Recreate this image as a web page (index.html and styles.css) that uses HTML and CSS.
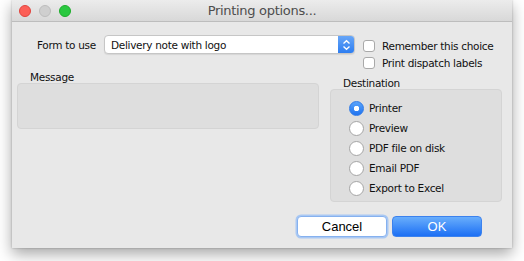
FILE: index.html
```html
<!DOCTYPE html>
<html lang="en">
<head>
    <meta charset="UTF-8">
    <title>Printing options...</title>
    <link rel="stylesheet" href="styles.css">
</head>
<body>
    <div class="window">
        <!-- title bar -->
        <div class="titlebar">
            <div class="lights">
                <span class="light red"></span>
                <span class="light gray"></span>
                <span class="light green"></span>
            </div>
            <div class="title">Printing options...</div>
        </div>

        <div class="content">
            <!-- form row -->
            <div class="top-row">
                <div class="form-field">
                    <span class="label">Form to use</span>
                    <div class="popup">
                        <span class="popup-text">Delivery note with logo</span>
                        <span class="stepper">
                            <svg width="9" height="12" viewBox="0 0 9 12">
                                <path d="M1.5 4.5 L4.5 1.8 L7.5 4.5 M1.5 7.5 L4.5 10.2 L7.5 7.5" fill="none" stroke="#fff" stroke-width="1.4"/>
                            </svg>
                        </span>
                    </div>
                </div>
                <div class="checks">
                    <label class="check"><span class="box"></span>Remember this choice</label>
                    <label class="check"><span class="box"></span>Print dispatch labels</label>
                </div>
            </div>

            <div class="main">
                <div class="message-col">
                    <div class="group-label">Message</div>
                    <div class="group-box message-box"></div>
                </div>
                <div class="dest-col">
                    <div class="group-label">Destination</div>
                    <div class="group-box dest-box">
                        <div class="radio-row"><span class="radio on"></span>Printer</div>
                        <div class="radio-row"><span class="radio"></span>Preview</div>
                        <div class="radio-row"><span class="radio"></span>PDF file on disk</div>
                        <div class="radio-row"><span class="radio"></span>Email PDF</div>
                        <div class="radio-row"><span class="radio"></span>Export to Excel</div>
                    </div>
                </div>
            </div>

            <!-- buttons -->
            <div class="buttons">
                <button class="btn cancel">Cancel</button>
                <button class="btn ok">OK</button>
            </div>
        </div>
    </div>
</body>
</html>
```
FILE: styles.css
```css
body {
    margin: 0;
    padding: 0;
    background: #ffffff;
    font-family: "DejaVu Sans", sans-serif;
    font-size: 10.5px;
    letter-spacing: -0.3px;
    color: #111;
    height: 261px;
    overflow: hidden;
    white-space: nowrap;
}

.window {
    margin-left: 12px;
    width: 500px;
    height: 248px;
    background: #e8e8e8;
    box-shadow: 0 6px 14px rgba(0,0,0,0.35), 0 0 2px rgba(0,0,0,0.25);
    display: flex;
    flex-direction: column;
}

/* title bar */
.titlebar {
    position: relative;
    height: 21px;
    background: linear-gradient(to bottom, #ececec 0%, #d8d8d8 100%);
    border-bottom: 1px solid #bdbdbd;
    display: flex;
    align-items: center;
    justify-content: center;
}

.lights {
    position: absolute;
    left: 7px;
    top: 5px;
    display: flex;
    gap: 8px;
}

.light {
    width: 12px;
    height: 12px;
    border-radius: 50%;
    box-sizing: border-box;
}

.red { background: #fc5f57; border: 1px solid #e0443e; }
.gray { background: #cfcfcf; border: 1px solid #bdbdbd; }
.green { background: #2ac840; border: 1px solid #1dad2b; }

.title {
    font-size: 13px;
    color: #4d4d4d;
    letter-spacing: -0.3px;
}

.content {
    flex: 1;
    padding: 13px 10px 0 5px;
    display: flex;
    flex-direction: column;
}

.top-row {
    display: flex;
    align-items: flex-start;
}

.form-field {
    display: flex;
    align-items: center;
    margin-left: 20px;
}

.label {
    width: 67px;
}

.popup {
    width: 251px;
    height: 19px;
    box-sizing: border-box;
    background: #fff;
    border: 1px solid #c6c6c6;
    border-radius: 4px;
    box-shadow: 0 1px 1px rgba(0,0,0,0.08);
    display: flex;
    align-items: center;
    overflow: hidden;
}

.popup-text {
    flex: 1;
    padding-left: 6px;
}

.stepper {
    width: 17px;
    height: 19px;
    margin-right: -1px;
    background: linear-gradient(to bottom, #6aa8f8 0%, #2a7bf0 100%);
    display: flex;
    align-items: center;
    justify-content: center;
}

.checks {
    margin-left: 8px;
    margin-top: 2px;
    display: flex;
    flex-direction: column;
}

.check {
    height: 17px;
    display: flex;
    align-items: center;
}

.box {
    width: 12px;
    height: 12px;
    box-sizing: border-box;
    background: #fff;
    border: 1px solid #a9a9a9;
    border-radius: 3px;
    margin-right: 7px;
}

.main {
    margin-top: 0;
    display: flex;
    gap: 11px;
}

.message-col {
    width: 302px;
}

.dest-col {
    width: 172px;
    margin-top: 6px;
}

.group-label {
    height: 12px;
    line-height: 12px;
    padding-left: 13px;
}

.group-box {
    box-sizing: border-box;
    background: #dedede;
    border: 1px solid #d4d4d4;
    border-radius: 4px;
}

.message-box {
    height: 46px;
}

.dest-box {
    height: 113px;
    padding: 8px 0 0 18px;
}

.radio-row {
    height: 20px;
    display: flex;
    align-items: center;
}

.radio {
    width: 15px;
    height: 15px;
    box-sizing: border-box;
    border-radius: 50%;
    background: #fff;
    border: 1px solid #a5a5a5;
    margin-right: 5px;
}

.radio.on {
    background: radial-gradient(circle, #fff 0, #fff 2.5px, transparent 3px), linear-gradient(to bottom, #5aa4fa, #1f73f0);
    border-color: #2f7ae8;
}

.buttons {
    margin-top: 14px;
    display: flex;
    justify-content: flex-end;
    gap: 5px;
    padding-right: 20px;
}

.btn {
    width: 90px;
    height: 21px;
    font-family: "Liberation Sans", Arial, sans-serif;
    font-size: 13px;
    letter-spacing: 0;
    border-radius: 4px;
    padding: 0;
}

.cancel {
    background: #fff;
    color: #000;
    border: 1px solid #86b1ef;
    box-shadow: 0 0 0 1.5px #a9c8f3;
}

.ok {
    background: linear-gradient(to bottom, #69aefc 0%, #1c6ff4 100%);
    color: #fff;
    border: 1px solid #3c82ee;
}
```
